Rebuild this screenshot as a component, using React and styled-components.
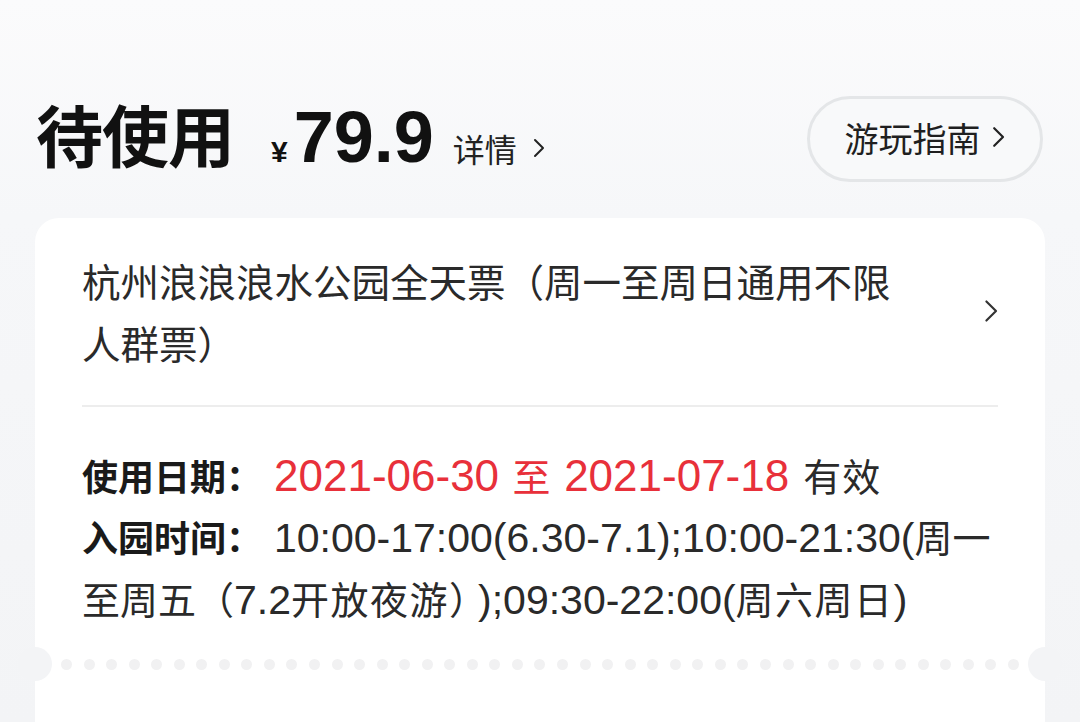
import React from 'react';
import styled, { createGlobalStyle } from 'styled-components';

const GlobalStyle = createGlobalStyle`
  html, body {
    margin: 0;
    padding: 0;
    background: #f4f5f7;
  }
  body {
    font-family: "Noto Sans CJK SC", "Noto Sans", sans-serif;
    color: #1a1a1a;
  }
`;

const Chevron = ({ size = 14, color = '#222', stroke = 2.2 }) => (
  <svg width={size * 0.6} height={size} viewBox="0 0 12 20" fill="none">
    <path d="M2 2 L10 10 L2 18" stroke={color} strokeWidth={stroke} strokeLinecap="round" strokeLinejoin="round" />
  </svg>
);

const Page = styled.div`
  height: 722px;
  overflow: hidden;
  background: linear-gradient(180deg, #fbfbfc 0%, #f6f7f9 30%, #f3f4f6 100%);
`;

const Header = styled.div`
  display: flex;
  align-items: flex-start;
  justify-content: space-between;
  padding: 96px 37px 0 36px;
  height: 86px;
`;

const TitleGroup = styled.div`
  display: flex;
  align-items: baseline;
`;

const Status = styled.h1`
  margin: 0;
  font-size: 67px;
  font-weight: 700;
  letter-spacing: -1px;
  color: #111;
  line-height: 1;
`;

const Yen = styled.span`
  margin-left: 37px;
  font-family: "Liberation Sans", sans-serif;
  font-size: 30px;
  font-weight: 700;
  color: #111;
`;

const Price = styled.span`
  margin-left: 6px;
  font-family: "Liberation Sans", sans-serif;
  font-size: 72px;
  font-weight: 700;
  color: #111;
`;

const DetailLink = styled.a`
  display: inline-flex;
  align-items: center;
  gap: 16px;
  margin-left: 19px;
  font-size: 32px;
  color: #222;
  text-decoration: none;
`;

const GuideButton = styled.button`
  display: flex;
  align-items: center;
  justify-content: center;
  gap: 12px;
  width: 236px;
  height: 86px;
  border: 3px solid #e4e6e8;
  border-radius: 43px;
  background: #f8f9fa;
  font-family: inherit;
  font-size: 34px;
  color: #1f1f1f;
  padding: 0 0 4px 0;
`;

const Card = styled.div`
  position: relative;
  margin: 36px 35px 0 35px;
  background: #fff;
  border-radius: 24px;
`;

const ProductRow = styled.div`
  display: flex;
  align-items: center;
  justify-content: space-between;
  margin: 0 47px;
  padding: 31px 0 32px;
  border-bottom: 2px solid #ededed;
`;

const ProductName = styled.div`
  font-size: 38.5px;
  line-height: 62px;
  color: #2a2a2a;
`;

const InfoBlock = styled.div`
  padding: 38px 47px 33px;
`;

const InfoLine = styled.div`
  font-size: 38px;
  line-height: 60px;
  color: #2a2a2a;
  white-space: nowrap;
`;

const Label = styled.span`
  font-size: 36px;
  font-weight: 700;
  color: #1a1a1a;
  margin-right: 12px;
`;

const Num = styled.span`
  font-family: "Liberation Sans", sans-serif;
  font-size: ${p => (p.large ? '44px' : '41px')};
  color: ${p => (p.red ? '#e8303a' : '#2a2a2a')};
  margin-left: ${p => p.gap || 0}px;
`;

const Red = styled.span`
  color: #e8303a;
  margin: 0 5px;
`;

const Valid = styled.span`
  margin-left: 14px;
  letter-spacing: 1px;
`;

const Wide = styled.span`
  letter-spacing: 1.5px;
`;

const Perforation = styled.div`
  position: relative;
  height: 2px;
  display: flex;
  align-items: center;
  justify-content: space-between;
  padding: 0 26px;
`;

const Dot = styled.span`
  width: 11px;
  height: 11px;
  border-radius: 50%;
  background: #f1f1f2;
  flex: none;
`;

const Notch = styled.span`
  position: absolute;
  top: -16px;
  ${p => (p.side === 'left' ? 'left: -17px;' : 'right: -17px;')}
  width: 34px;
  height: 34px;
  border-radius: 50%;
  background: #f3f4f6;
`;

const CodeSection = styled.div`
  padding: 57px 47px 40px;
  text-align: center;
`;

const CodeTitle = styled.div`
  font-size: 36px;
  line-height: 40px;
  color: #222;
  margin-left: -70px;
`;

export default function App() {
  const dots = Array.from({ length: 43 });
  return (
    <>
      <GlobalStyle />
      <Page>
        <Header>
          <TitleGroup>
            <Status>待使用</Status>
            <Yen>¥</Yen>
            <Price>79.9</Price>
            <DetailLink>
              详情
              <Chevron size={20} stroke={2} />
            </DetailLink>
          </TitleGroup>
          <GuideButton>
            游玩指南
            <Chevron size={22} stroke={2} />
          </GuideButton>
        </Header>

        <Card>
          <ProductRow>
            <ProductName>
              杭州浪浪浪水公园全天票（周一至周日通用不限
              <br />
              人群票）
            </ProductName>
            <Chevron size={24} stroke={1.8} color="#333" />
          </ProductRow>

          <InfoBlock>
            <InfoLine>
              <Label>使用日期：</Label>
              <Num red large>2021-06-30</Num> <Red>至</Red> <Num red large>2021-07-18</Num>
              <Valid>有效</Valid>
            </InfoLine>
            <InfoLine>
              <Label>入园时间：</Label>
              <Num>10:00-17:00(6.30-7.1);10:00-21:30(</Num>周一
              <br />
              至周五（<Num>7.2</Num>
              <Wide>开放夜游</Wide>）<Num gap={10}>);09:30-22:00(</Num>
              <Wide>周六周日</Wide>
              <Num>)</Num>
            </InfoLine>
          </InfoBlock>

          <Perforation>
            <Notch side="left" />
            {dots.map((_, i) => (
              <Dot key={i} />
            ))}
            <Notch side="right" />
          </Perforation>

          <CodeSection>
            <CodeTitle>核销码</CodeTitle>
          </CodeSection>
        </Card>
      </Page>
    </>
  );
}
